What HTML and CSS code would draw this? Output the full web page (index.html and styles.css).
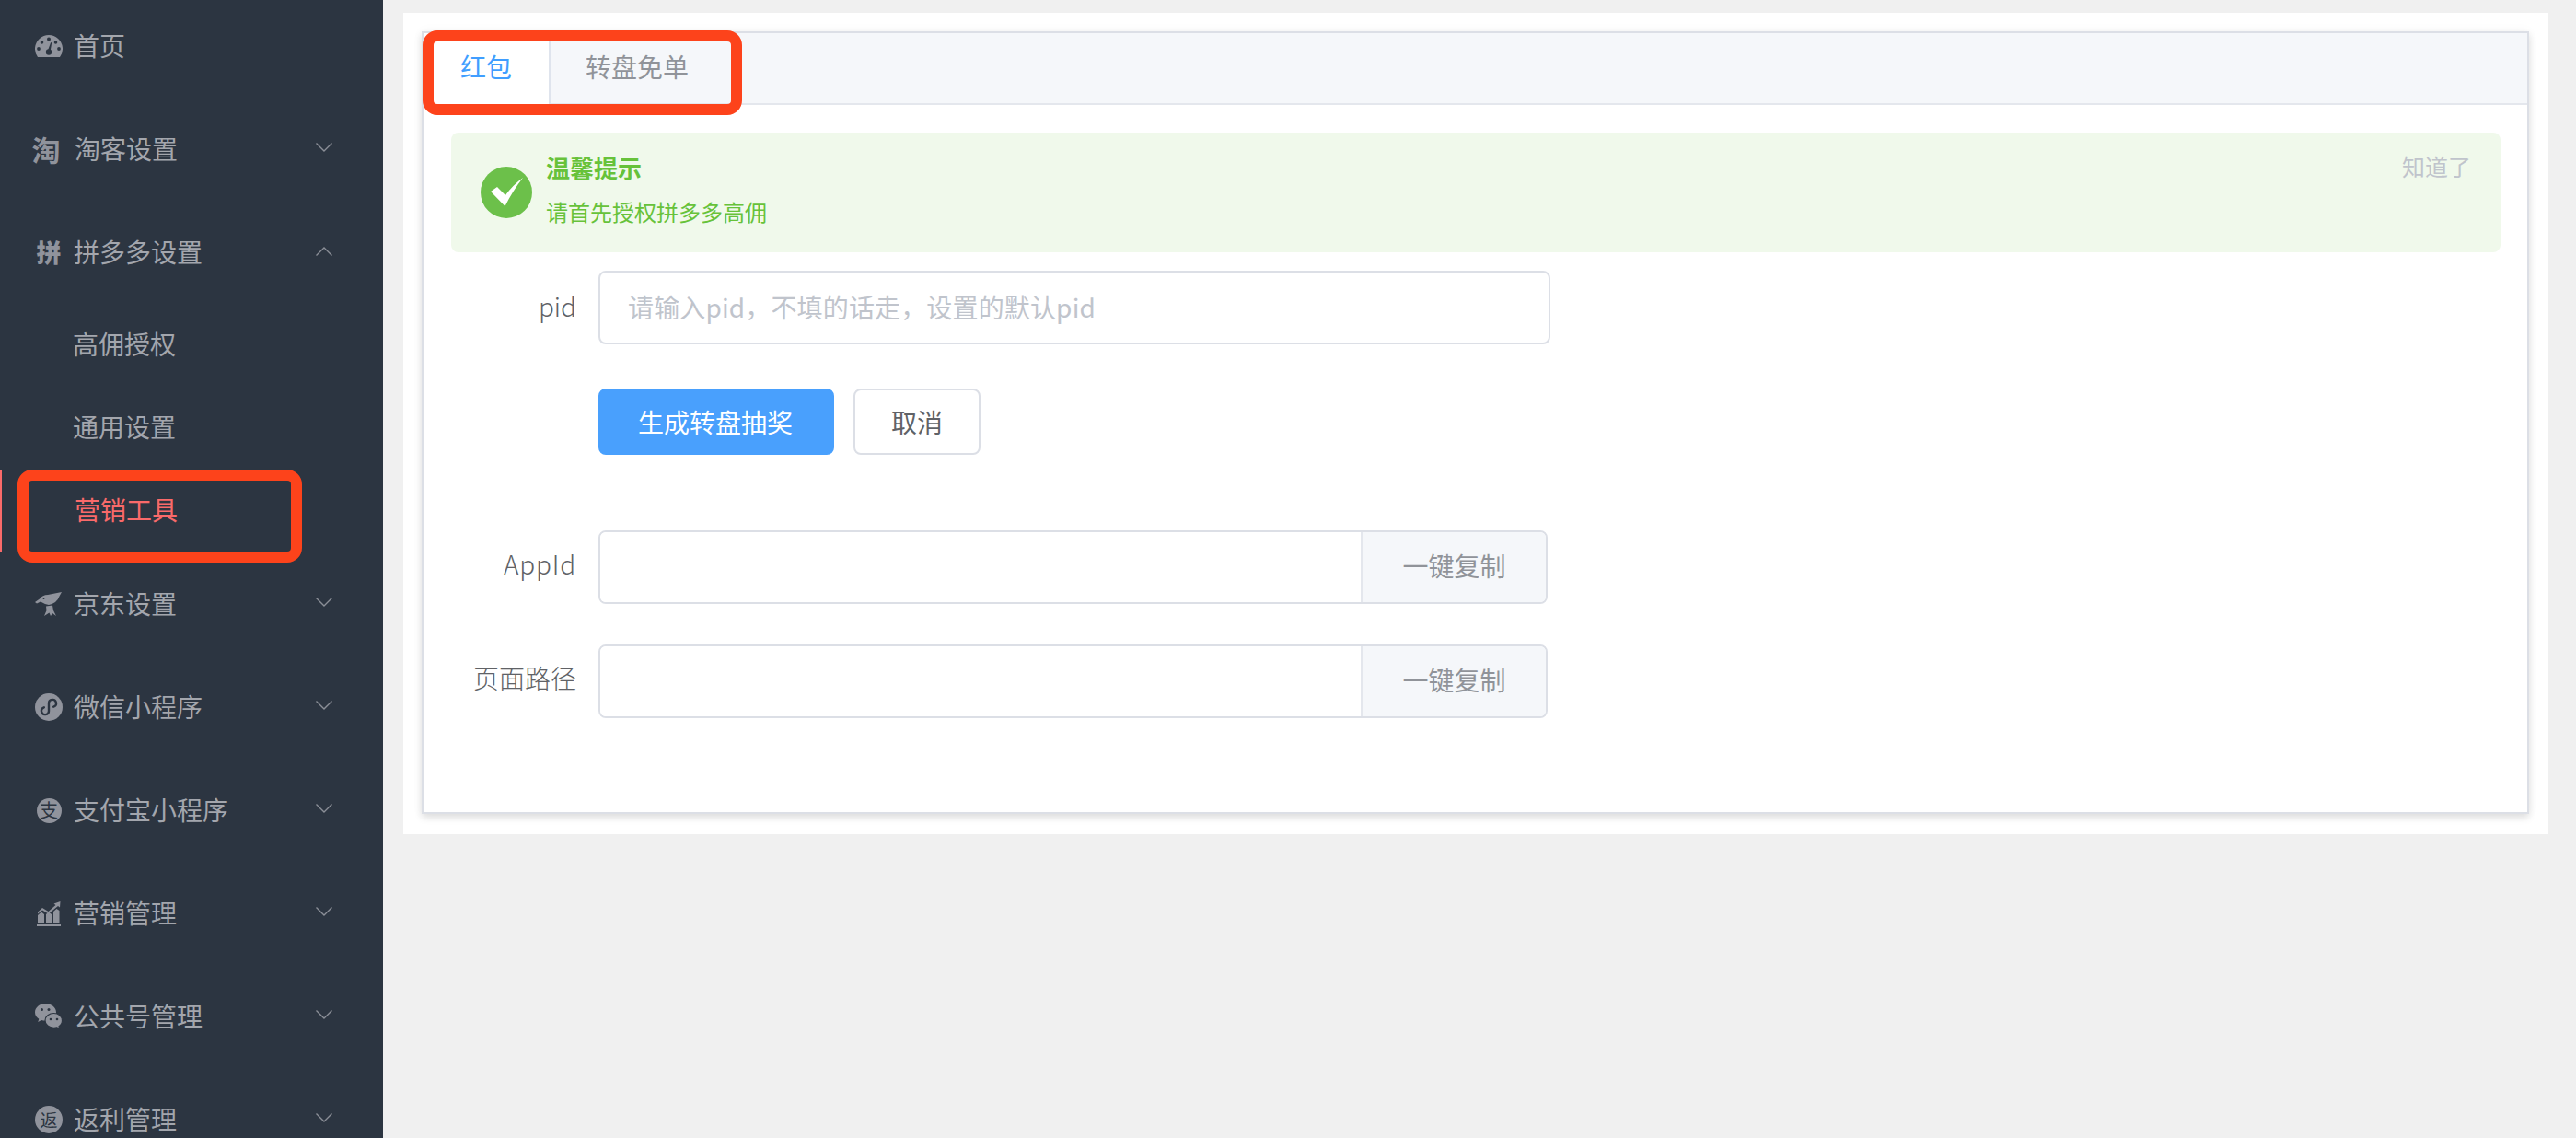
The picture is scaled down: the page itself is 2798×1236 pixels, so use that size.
FILE: index.html
```html
<!DOCTYPE html>
<html lang="zh-CN">
<head>
<meta charset="utf-8">
<title>营销工具</title>
<link rel="stylesheet" href="styles.css">
</head>
<body>
<aside class="sidebar">
  <ul class="menu">
    <li class="row">
      <span class="icon"><svg width="30" height="24" viewBox="0 0 30 24"><path class="ifill" d="M3 24A15 15 0 1 1 27 24Z"/><g class="ibg"><circle cx="15" cy="4.500" r="2"/><circle cx="7.500" cy="8" r="1.800"/><circle cx="22.500" cy="8" r="1.800"/><circle cx="4" cy="15" r="1.900"/><circle cx="26" cy="15" r="1.900"/><circle cx="15" cy="18.500" r="3.200"/><path d="M13.600 17.500L17.200 8l1 .4L16.400 19z"/></g></svg></span>
      <span class="label">首页</span>
    </li>
    <li class="row">
      <span class="icon icon-glyph glyph-tao">淘</span>
      <span class="label label-shift">淘客设置</span>
      <svg class="chev" width="18" height="10" viewBox="0 0 18 10"><path d="M.5.5L9 9 17.500.5"/></svg>
    </li>
    <li class="row">
      <span class="icon icon-glyph glyph-pin">拼</span>
      <span class="label">拼多多设置</span>
      <svg class="chev chev-up" width="18" height="10" viewBox="0 0 18 10"><path d="M.5 9.500L9 1l8.500 8.500"/></svg>
    </li>
    <li class="sub">高佣授权</li>
    <li class="sub">通用设置</li>
    <li class="sub sub-active">营销工具<span class="mark mark-menu"></span></li>
    <li class="row">
      <span class="icon"><svg width="30" height="26" viewBox="0 0 30 26"><path class="ifill" d="M0 11L5 7.500Q8 3 14 3L29 0 26.500 4.500Q24 12 15 14 10 13 6 10.500L2 12.500Z"/><path class="ifill" d="M12 15.500L19 14.500 20 20 23 26 19 23 17 26 15.500 22.500 10 26 12.500 20Z"/><circle class="ibg" cx="9.500" cy="7" r="1"/></svg></span>
      <span class="label">京东设置</span>
      <svg class="chev" width="18" height="10" viewBox="0 0 18 10"><path d="M.5.5L9 9 17.500.5"/></svg>
    </li>
    <li class="row">
      <span class="icon"><svg width="30" height="30" viewBox="0 0 30 30"><circle class="ifill" cx="15" cy="15" r="15"/><path class="iline" d="M9.800 15.300A4 4 0 1 0 15 19V11A4 4 0 1 1 20.200 14.700"/></svg></span>
      <span class="label">微信小程序</span>
      <svg class="chev" width="18" height="10" viewBox="0 0 18 10"><path d="M.5.5L9 9 17.500.5"/></svg>
    </li>
    <li class="row">
      <span class="icon icon-glyph"><span class="disc disc-small">支</span></span>
      <span class="label">支付宝小程序</span>
      <svg class="chev" width="18" height="10" viewBox="0 0 18 10"><path d="M.5.5L9 9 17.500.5"/></svg>
    </li>
    <li class="row">
      <span class="icon"><svg width="26" height="27" viewBox="0 0 26 27"><path class="ifill" d="M0 25h26v2H0zM1 23.500V15l4-3.500 3 2.500v9.500zM10 23.500V14l3-2.500 3 2.500v9.500zM18 23.500V11l3.500-3 3 2v13.500zM1 11.500L6 7l6.500 4L20.500 4 18.500 2.500 25.500 0 25 6.500 23 5 12.500 13.500 6 9.500 1 13.500z"/></svg></span>
      <span class="label">营销管理</span>
      <svg class="chev" width="18" height="10" viewBox="0 0 18 10"><path d="M.5.5L9 9 17.500.5"/></svg>
    </li>
    <li class="row">
      <span class="icon"><svg width="30" height="29" viewBox="0 0 30 29"><path class="ifill" d="M11.500 0C5.100 0 0 4.200 0 9.500c0 3 1.700 5.600 4.300 7.300L3.200 20l3.800-2c1.500.4 3 .7 4.500.7 6.400 0 11.500-4 11.500-9.200S17.900 0 11.500 0z"/><path class="ifill ring" d="M20.500 10.500c-5.200 0-9.500 3.500-9.500 8s4.300 7.800 9.500 7.800c1.100 0 2.300-.2 3.300-.5l3 1.700-.8-2.800c2.400-1.400 3.500-3.700 3.500-6.200 0-4.500-3.800-8-9-8z"/><g class="ibg"><circle cx="7.500" cy="6.500" r="1.500"/><circle cx="15" cy="6.500" r="1.500"/><circle cx="17" cy="17" r="1.300"/><circle cx="24" cy="17" r="1.300"/></g></svg></span>
      <span class="label">公共号管理</span>
      <svg class="chev" width="18" height="10" viewBox="0 0 18 10"><path d="M.5.5L9 9 17.500.5"/></svg>
    </li>
    <li class="row">
      <span class="icon icon-glyph"><span class="disc">返</span></span>
      <span class="label">返利管理</span>
      <svg class="chev" width="18" height="10" viewBox="0 0 18 10"><path d="M.5.5L9 9 17.500.5"/></svg>
    </li>
  </ul>
</aside>
<main class="main">
  <section class="panel">
    <div class="card">
      <div class="tabs">
        <div class="tab tab-active">红包</div>
        <div class="tab tab-second">转盘免单</div>
        <span class="mark mark-tabs"></span>
      </div>
      <div class="content">
        <div class="alert">
          <svg class="alert-icon" width="56" height="56" viewBox="0 0 56 56"><circle cx="28" cy="28" r="28" fill="#6cc04a"/><path d="M11 27L18 22 27 31Q35 20 46 12 35 26 26.500 43Z" fill="#fff"/></svg>
          <div class="alert-text">
            <div class="alert-title">温馨提示</div>
            <div class="alert-desc">请首先授权拼多多高佣</div>
          </div>
          <span class="alert-close">知道了</span>
        </div>
        <div class="form-row">
          <label class="form-label">pid</label>
          <input class="input" type="text" placeholder="请输入pid，不填的话走，设置的默认pid">
        </div>
        <div class="actions">
          <button class="btn btn-primary" type="button">生成转盘抽奖</button>
          <button class="btn" type="button">取消</button>
        </div>
        <div class="form-row form-row-copy">
          <label class="form-label label-latin">AppId</label>
          <div class="group">
            <input class="group-input" type="text">
            <span class="group-append">一键复制</span>
          </div>
        </div>
        <div class="form-row form-row-path">
          <label class="form-label">页面路径</label>
          <div class="group">
            <input class="group-input" type="text">
            <span class="group-append">一键复制</span>
          </div>
        </div>
      </div>
    </div>
  </section>
</main>
</body>
</html>
```
FILE: styles.css
```css
* { box-sizing: border-box; }
html, body { margin: 0; height: 100%; }
body {
  display: flex;
  overflow: hidden;
  background: #f0f0f0;
  font-family: "Noto Sans CJK SC", "Noto Sans", sans-serif;
  font-size: 28px;
  color: #606266;
}

/* sidebar */
.sidebar {
  width: 416px;
  flex: none;
  height: 1236px;
  overflow: hidden;
  background: #2c3541;
  color: #a3a6ad;
}
.menu { list-style: none; margin: -6px 0 0; padding: 0; }
.row {
  height: 112px;
  display: flex;
  align-items: center;
  padding: 0 55px 0 38px;
}
.icon {
  width: 30px;
  flex: none;
  display: flex;
  justify-content: center;
  align-items: center;
  margin-right: 12px;
}
.icon svg { display: block; }
.ifill { fill: #90939c; }
.ibg { fill: #2c3541; }
.iline { fill: none; stroke: #2c3541; stroke-width: 2.4; stroke-linecap: round; }
.ring { stroke: #2c3541; stroke-width: 1.2; }
.icon-glyph { color: #90939c; line-height: 30px; font-weight: 700; }
.glyph-tao { font-size: 31px; margin-left: -3px; margin-right: 15px; }
.glyph-pin { font-size: 27px; font-weight: 900; }
.disc {
  width: 30px;
  height: 30px;
  border-radius: 50%;
  background: #90939c;
  color: #2c3541;
  font-size: 19px;
  font-weight: 400;
  display: flex;
  align-items: center;
  justify-content: center;
}
.disc-small { width: 27px; height: 27px; font-size: 20px; }
.label { line-height: 40px; padding-bottom: 2px; }
.label-shift { margin-left: 1px; }
.chev { margin-left: auto; margin-bottom: 5px; flex: none; }
.chev path { fill: none; stroke: #8b8f97; stroke-width: 1.4; }
.chev-up { margin-bottom: 3px; }
.sub {
  height: 90px;
  line-height: 86px;
  padding-left: 79px;
  position: relative;
}
.sub-active {
  color: #f96a6a;
  border-left: 2px solid #f96a6a;
  padding-left: 79px;
}

/* red annotation boxes */
.mark {
  position: absolute;
  border: 12px solid #fd431b;
  border-radius: 16px;
  pointer-events: none;
}
.mark-menu { left: 17px; top: 0; width: 309px; height: 101px; }
.mark-tabs { left: -1px; top: -3px; width: 347px; height: 92px; }

/* main */
.main { flex: 1; min-width: 0; padding: 14px 30px 0 22px; }
.panel { background: #fff; padding: 20px 21px 22px 20px; }
.card {
  height: 850px;
  background: #fff;
  border: 2px solid #dcdfe6;
  box-shadow: 0 4px 8px rgba(0, 0, 0, .12), 0 0 12px rgba(0, 0, 0, .04);
}
.tabs {
  position: relative;
  display: flex;
  height: 78px;
  background: #f5f7fa;
  border-bottom: 2px solid #e4e7ed;
}
.tab {
  height: 77px;
  padding: 0 40px;
  line-height: 72px;
  color: #909399;
  border-right: 2px solid #dfe4ed;
}
.tab-active { color: #409eff; background: #fff; }
.tab-second { padding: 0 46px 0 38px; }
.content { padding: 30px 29px 0 30px; }

/* alert */
.alert {
  position: relative;
  display: flex;
  align-items: center;
  height: 130px;
  padding-left: 32px;
  background: #f0f9eb;
  border-radius: 8px;
  color: #67c23a;
}
.alert-icon { flex: none; margin-right: 15px; }
.alert-title { font-size: 26px; font-weight: 700; line-height: 36px; }
.alert-desc { font-size: 24px; line-height: 36px; margin-top: 12px; }
.alert-text { margin-top: -6px; }
.alert-close {
  position: absolute;
  right: 32px;
  top: 18px;
  font-size: 25px;
  line-height: 36px;
  color: #c0c4cc;
}

/* form */
.form-row { display: flex; align-items: center; margin-top: 20px; }
.form-label {
  width: 160px;
  flex: none;
  padding: 0 24px 5px 0;
  text-align: right;
  font-weight: 300;
  color: #606266;
}
.form-row-copy .form-label, .form-row-path .form-label { padding-bottom: 8px; }
.label-latin { letter-spacing: .8px; }
.input {
  width: 1034px;
  height: 80px;
  padding: 0 30px 3px;
  border: 2px solid #dcdfe6;
  border-radius: 8px;
  font: inherit;
  background: #fff;
  outline: none;
}
.input::placeholder { color: #c0c4cc; opacity: 1; letter-spacing: .15px; }
.actions { display: flex; gap: 21px; margin: 48px 0 0 160px; }
.btn {
  height: 72px;
  padding: 0 39px;
  border: 2px solid #dcdfe6;
  border-radius: 8px;
  background: #fff;
  color: #606266;
  font: inherit;
}
.btn-primary { padding: 0 43px 0 41px; background: #49a0fd; border-color: #49a0fd; color: #fff; }
.form-row-copy { margin-top: 82px; }
.form-row-path { margin-top: 44px; }
.group {
  width: 1031px;
  height: 80px;
  display: flex;
  border: 2px solid #dcdfe6;
  border-radius: 8px;
  overflow: hidden;
}
.group-input { flex: 1; min-width: 0; border: 0; outline: none; font: inherit; background: #fff; }
.group-append {
  width: 201px;
  flex: none;
  background: #f5f7fa;
  border-left: 2px solid #e4e7ed;
  color: #909399;
  text-align: center;
  line-height: 72px;
}
```
